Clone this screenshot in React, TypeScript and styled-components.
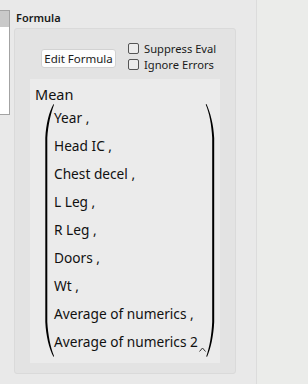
import React from "react";
import styled, { createGlobalStyle } from "styled-components";

const GlobalStyle = createGlobalStyle`
  html, body { margin: 0; padding: 0; }
  body {
    background: #ebebeb;
    font-family: "Noto Sans", "Open Sans", sans-serif;
    color: #1a1a1a;
  }
`;

const Page = styled.div`
  display: flex;
  width: 308px;
  height: 384px;
  overflow: hidden;
`;

const ListColumn = styled.div`
  width: 10px;
  flex: none;
  padding-top: 10px;
  background: #e9e9e9;
`;

const ListBox = styled.div`
  height: 105px;
  box-sizing: border-box;
  background: #ffffff;
  border: 1px solid #a3a3a3;
  border-left: none;
`;

const ListRowSelected = styled.div`
  height: 16px;
  background: #c9c9c9;
`;

const MainColumn = styled.div`
  width: 247px;
  flex: none;
  display: flex;
  flex-direction: column;
  box-sizing: border-box;
  padding-left: 4px;
  background: #e9e9e9;
  border-right: 1px solid #dcdcdc;
`;

const RightFill = styled.div`
  flex: 1;
  background: #ebecea;
`;

const SectionLabel = styled.div`
  padding: 10px 0 0 2px;
  height: 18px;
  line-height: 16px;
  font-size: 11px;
  font-weight: 600;
  color: #1a1a1a;
`;

const Panel = styled.div`
  width: 222px;
  flex: 1;
  margin-bottom: 10px;
  box-sizing: border-box;
  display: flex;
  flex-direction: column;
  background: #e3e3e3;
  border: 1px solid #dadada;
  border-radius: 3px;
  padding: 0 15px 10px 15px;
`;

const Toolbar = styled.div`
  display: flex;
  align-items: flex-start;
  height: 50px;
  box-sizing: border-box;
  padding: 12px 0 0 11px;
  gap: 12px;
`;

const Button = styled.button`
  margin-top: 8px;
  width: 75px;
  height: 19px;
  padding: 0;
  box-sizing: border-box;
  background: #fdfdfd;
  border: 1px solid #d2d2d2;
  border-radius: 3px;
  font-family: inherit;
  font-size: 11.5px;
  line-height: 17px;
  color: #1a1a1a;
`;

const CheckGroup = styled.div`
  display: flex;
  flex-direction: column;
  gap: 2px;
`;

const CheckRow = styled.label`
  display: flex;
  align-items: center;
  gap: 5px;
  height: 14px;
  font-size: 11.2px;
  color: #1a1a1a;
`;

const CheckBox = styled.span`
  width: 11px;
  height: 11px;
  box-sizing: border-box;
  border: 1px solid #555555;
  border-radius: 2px;
  background: #ececec;
`;

const FormulaBox = styled.div`
  flex: 1;
  background: #ebebeb;
  padding: 6px 0 0 5px;
  box-sizing: border-box;
`;

const FuncName = styled.div`
  font-size: 14.5px;
  line-height: 19px;
  color: #111111;
`;

const ParenRow = styled.div`
  display: flex;
  margin-left: 9px;
`;

const ArgColumn = styled.div`
  position: relative;
  width: 150px;
  display: flex;
  flex-direction: column;
`;

const Arg = styled.div`
  height: 28px;
  line-height: 27px;
  font-size: 13.7px;
  color: #111111;
  white-space: nowrap;
`;

const Caret = styled.svg`
  position: absolute;
  left: 145px;
  bottom: 5px;
`;

const LeftParen = () => (
  <svg width="10" height="253" viewBox="0 0 10 253">
    <path
      d="M9.5 0 C5 8 2 20 1.3 34 L1.3 218 C2 232 5 244 9.5 253 L10 252 C6.5 243 4 231 3.3 218 L3.3 34 C4 21 7 9 10 0.8 Z"
      fill="#000"
    />
  </svg>
);

const RightParen = () => (
  <svg width="12" height="253" viewBox="0 0 12 253">
    <path
      d="M2.5 0 C6.5 9 9.5 20 10.2 34 L10.2 218 C9.5 232 7 244 3 253 L2.3 252.3 C5.6 243 7.6 231 8.2 218 L8.2 34 C7.6 21 5.3 9 1.7 0.6 Z"
      fill="#000"
    />
  </svg>
);

const args = [
  "Year ,",
  "Head IC ,",
  "Chest decel ,",
  "L Leg ,",
  "R Leg ,",
  "Doors ,",
  "Wt ,",
  "Average of numerics ,",
  "Average of numerics 2",
];

export default function App() {
  return (
    <>
      <GlobalStyle />
      <Page>
        <ListColumn>
          <ListBox>
            <ListRowSelected />
          </ListBox>
        </ListColumn>
        <MainColumn>
          <SectionLabel>Formula</SectionLabel>
          <Panel>
            <Toolbar>
              <Button>Edit Formula</Button>
              <CheckGroup>
                <CheckRow>
                  <CheckBox />
                  Suppress Eval
                </CheckRow>
                <CheckRow>
                  <CheckBox />
                  Ignore Errors
                </CheckRow>
              </CheckGroup>
            </Toolbar>
            <FormulaBox>
              <FuncName>Mean</FuncName>
              <ParenRow>
                <LeftParen />
                <ArgColumn>
                  {args.map((a) => (
                    <Arg key={a}>{a}</Arg>
                  ))}
                  <Caret width="7" height="5" viewBox="0 0 7 5">
                    <path d="M0.5 4.5 L3.5 1 L6.5 4.5" fill="none" stroke="#333" strokeWidth="1" />
                  </Caret>
                </ArgColumn>
                <RightParen />
              </ParenRow>
            </FormulaBox>
          </Panel>
        </MainColumn>
        <RightFill />
      </Page>
    </>
  );
}
